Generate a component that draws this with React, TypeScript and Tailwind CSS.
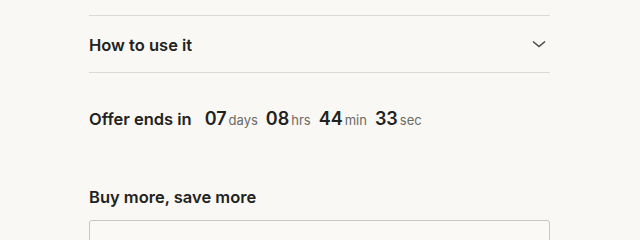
import React from 'react';

const App: React.FC = () => {
  const countdown = [
    { value: '07', unit: 'days' },
    { value: '08', unit: 'hrs' },
    { value: '44', unit: 'min' },
    { value: '33', unit: 'sec' },
  ];

  return (
    <div className="min-h-screen bg-[#f9f8f4] font-['Inter',sans-serif] text-[#222220]">
      <div className="w-[461px] ml-[89px] pt-[15px]">
        {/* Accordion row */}
        <div className="flex items-center justify-between h-[58px] border-t border-b border-[#dcdad4]">
          <span className="text-[16.5px] font-semibold translate-y-[1px]">How to use it</span>
          <svg className="h-4 w-4 mr-[3px] text-[#4a4a48]" viewBox="0 0 16 16" fill="none" stroke="currentColor" strokeWidth="1.6">
            <path d="M2 5.5l6 5 6-5" />
          </svg>
        </div>

        {/* Countdown */}
        <div className="flex items-baseline mt-[32px] h-[24px]">
          <span className="text-[16.5px] font-semibold mr-[13px]">Offer ends in</span>
          {countdown.map((c) => (
            <span key={c.unit} className="flex items-baseline mr-[8px]">
              <span className="text-[18px] font-semibold">{c.value}</span>
              <span className="text-[13px] text-[#6b6a66] ml-[2px]">{c.unit}</span>
            </span>
          ))}
        </div>

        {/* Buy more */}
        <h3 className="text-[16.5px] font-semibold mt-[56px]">Buy more, save more</h3>
        <div className="mt-[10px] h-[40px] rounded-[3px] border border-[#c8c6c0] bg-[#faf9f6]" />
      </div>
    </div>
  );
};

export default App;
